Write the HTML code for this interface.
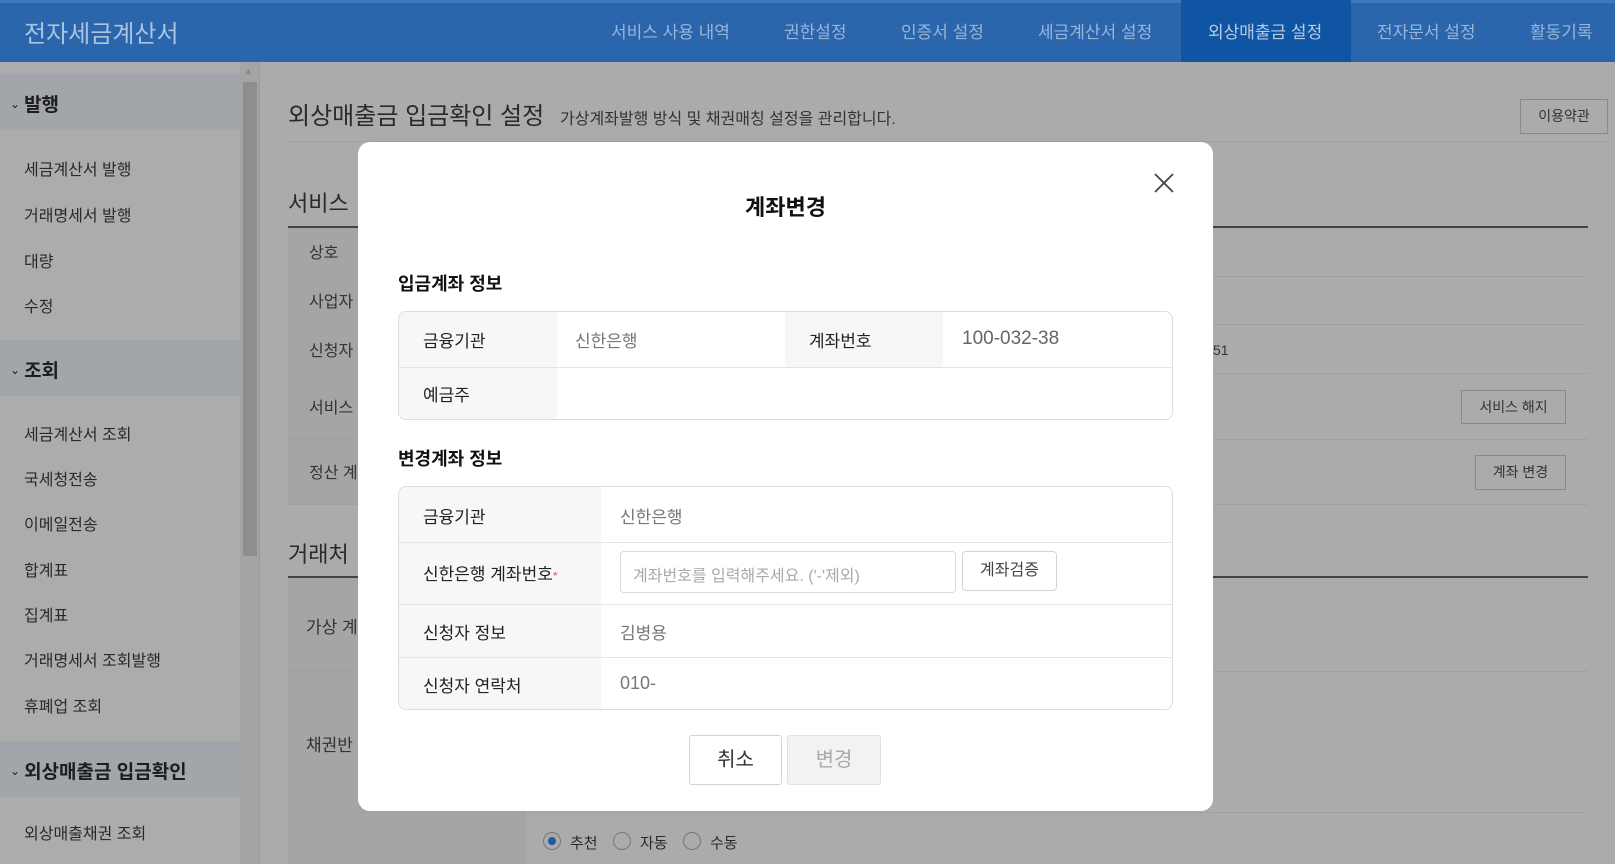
<!DOCTYPE html>
<html><head><meta charset="utf-8"><style>
*{margin:0;padding:0;box-sizing:border-box}
body{width:1615px;height:864px;overflow:hidden;background:#ababab;font-family:"Liberation Sans","Noto Sans CJK KR","NanumGothic",sans-serif;position:relative;color:#2a2a2a}
.a{position:absolute;white-space:nowrap}
.hd{left:0;top:0;width:1615px;height:62px;background:#2b66ad;border-top:3px solid #3a7ac0}
.nav{top:18px;font-size:17px;color:#98b4d8}
.side{left:0;top:62px;width:240px;height:802px;background:#acacac}
.sh{left:0;width:240px;height:56px;background:#a2a6aa;font-size:19px;font-weight:bold;color:#1e1e1e;padding:16px 0 0 10px}
.sh small{font-size:12px;font-weight:normal;vertical-align:3px;margin-right:4px}
.si{left:24px;font-size:16px;color:#2a2a2a}
.ln{height:1px;background:#a0a0a0}
.mod{left:358px;top:142px;width:855px;height:669px;background:#fff;border-radius:12px}
.tb{border:1px solid #dcdde0;border-radius:8px;overflow:hidden;background:#fff}
.lb{background:#f7f7f7;font-size:17px;color:#222}
.vl{font-size:17px;color:#777}
</style></head><body>
<div class="a hd"></div>
<div class="a" style="left:24px;top:14px;font-size:24px;color:#a9c3e3">전자세금계산서</div>
<div class="a" style="left:1181px;top:0;width:170px;height:62px;background:#0f55a3"></div>
<div class="a nav" style="left:611px">서비스 사용 내역</div>
<div class="a nav" style="left:784px">권한설정</div>
<div class="a nav" style="left:901px">인증서 설정</div>
<div class="a nav" style="left:1038px">세금계산서 설정</div>
<div class="a nav" style="left:1208px;color:#b6cbe6">외상매출금 설정</div>
<div class="a nav" style="left:1377px">전자문서 설정</div>
<div class="a nav" style="left:1530px">활동기록</div>

<div class="a side"></div>
<div class="a" style="left:240px;top:62px;width:20px;height:802px;background:#a4a4a4;border-right:1px solid #999"></div>
<div class="a" style="left:244px;top:66px;font-size:9px;color:#888">▲</div>
<div class="a" style="left:243px;top:82px;width:14px;height:474px;background:#8e8e8e"></div>
<div class="a sh" style="top:74px"><small>⌄</small>발행</div>
<div class="a si" style="top:156px">세금계산서 발행</div>
<div class="a si" style="top:202px">거래명세서 발행</div>
<div class="a si" style="top:248px">대량</div>
<div class="a si" style="top:293px">수정</div>
<div class="a sh" style="top:340px"><small>⌄</small>조회</div>
<div class="a si" style="top:421px">세금계산서 조회</div>
<div class="a si" style="top:466px">국세청전송</div>
<div class="a si" style="top:511px">이메일전송</div>
<div class="a si" style="top:557px">합계표</div>
<div class="a si" style="top:602px">집계표</div>
<div class="a si" style="top:647px">거래명세서 조회발행</div>
<div class="a si" style="top:693px">휴폐업 조회</div>
<div class="a sh" style="top:741px"><small>⌄</small>외상매출금 입금확인</div>
<div class="a si" style="top:820px">외상매출채권 조회</div>

<div class="a" style="left:288px;top:96px;font-size:24px;color:#2a2a2a">외상매출금 입금확인 설정</div>
<div class="a" style="left:560px;top:105px;font-size:16px;color:#333">가상계좌발행 방식 및 채권매칭 설정을 관리합니다.</div>
<div class="a" style="left:1520px;top:99px;width:88px;height:35px;border:1px solid #8a8a8a;font-size:14px;text-align:center;line-height:33px;color:#333">이용약관</div>
<div class="a ln" style="left:288px;top:141px;width:1320px"></div>
<div class="a" style="left:288px;top:186px;font-size:22px">서비스</div>
<div class="a" style="left:288px;top:226px;width:1300px;height:2px;background:#444"></div>
<div class="a" style="left:288px;top:228px;width:70px;height:276px;background:#a5a5a5"></div>
<div class="a ln" style="left:288px;top:276px;width:1300px"></div>
<div class="a ln" style="left:288px;top:324px;width:1300px"></div>
<div class="a ln" style="left:288px;top:373px;width:1300px"></div>
<div class="a ln" style="left:288px;top:439px;width:1300px"></div>
<div class="a ln" style="left:288px;top:504px;width:1300px"></div>
<div class="a" style="left:309px;top:239px;font-size:16px;color:#333">상호</div>
<div class="a" style="left:309px;top:288px;font-size:16px;color:#333">사업자</div>
<div class="a" style="left:309px;top:337px;font-size:16px;color:#333">신청자</div>
<div class="a" style="left:309px;top:394px;font-size:16px;color:#333">서비스</div>
<div class="a" style="left:309px;top:459px;font-size:16px;color:#333">정산 계</div>
<div class="a" style="left:1213px;top:342px;font-size:14px;color:#333">51</div>
<div class="a" style="left:1461px;top:390px;width:105px;height:34px;border:1px solid #8a8a8a;font-size:14px;text-align:center;line-height:32px;color:#333">서비스 해지</div>
<div class="a" style="left:1475px;top:455px;width:91px;height:35px;border:1px solid #8a8a8a;font-size:14px;text-align:center;line-height:33px;color:#333">계좌 변경</div>
<div class="a" style="left:288px;top:537px;font-size:22px">거래처</div>
<div class="a" style="left:288px;top:576px;width:1300px;height:2px;background:#444"></div>
<div class="a" style="left:288px;top:578px;width:238px;height:286px;background:#a5a5a5"></div>
<div class="a ln" style="left:288px;top:671px;width:1300px"></div>
<div class="a ln" style="left:288px;top:812px;width:1300px"></div>
<div class="a" style="left:306px;top:613px;font-size:17px;color:#333">가상 계</div>
<div class="a" style="left:306px;top:731px;font-size:17px;color:#333">채권반</div>
<div class="a" style="left:543px;top:832px;width:18px;height:18px;border:1px solid #777;border-radius:50%;background:#aaa"><div style="margin:4px;width:8px;height:8px;border-radius:50%;background:#1f5ca8"></div></div>
<div class="a" style="left:570px;top:832px;font-size:15px">추천</div>
<div class="a" style="left:613px;top:832px;width:18px;height:18px;border:1px solid #777;border-radius:50%"></div>
<div class="a" style="left:640px;top:832px;font-size:15px">자동</div>
<div class="a" style="left:683px;top:832px;width:18px;height:18px;border:1px solid #777;border-radius:50%"></div>
<div class="a" style="left:710px;top:832px;font-size:15px">수동</div>

<div class="a mod"></div>
<div class="a" style="left:358px;top:190px;width:855px;text-align:center;font-size:22px;font-weight:bold;color:#111">계좌변경</div>
<svg class="a" style="left:1153px;top:172px" width="22" height="22" viewBox="0 0 22 22"><path d="M2 2L20 20M20 2L2 20" stroke="#444" stroke-width="1.8"/></svg>
<div class="a" style="left:398px;top:270px;font-size:18px;font-weight:bold;color:#111">입금계좌 정보</div>
<div class="a tb" style="left:398px;top:311px;width:775px;height:109px">
 <div class="a lb" style="left:0;top:0;width:158px;height:55px;padding:15px 0 0 24px">금융기관</div>
 <div class="a vl" style="left:176px;top:15px">신한은행</div>
 <div class="a lb" style="left:386px;top:0;width:158px;height:55px;padding:15px 0 0 24px">계좌번호</div>
 <div class="a vl" style="left:563px;top:16px;font-size:19px;color:#666">100-032-38</div>
 <div class="a" style="left:0;top:55px;width:775px;height:1px;background:#e4e4e4"></div>
 <div class="a lb" style="left:0;top:56px;width:158px;height:53px;padding:13px 0 0 24px">예금주</div>
</div>
<div class="a" style="left:398px;top:445px;font-size:18px;font-weight:bold;color:#111">변경계좌 정보</div>
<div class="a tb" style="left:398px;top:486px;width:775px;height:224px">
 <div class="a lb" style="left:0;top:0;width:202px;height:224px"></div>
 <div class="a" style="left:0;top:55px;width:775px;height:1px;background:#e4e4e4"></div>
 <div class="a" style="left:0;top:117px;width:775px;height:1px;background:#e4e4e4"></div>
 <div class="a" style="left:0;top:170px;width:775px;height:1px;background:#e4e4e4"></div>
 <div class="a lb" style="left:24px;top:16px;background:none">금융기관</div>
 <div class="a vl" style="left:221px;top:16px">신한은행</div>
 <div class="a lb" style="left:24px;top:73px;background:none">신한은행 계좌번호<span style="color:#e55;font-size:12px">*</span></div>
 <div class="a" style="left:221px;top:64px;width:336px;height:42px;border:1px solid #dcdcdc;border-radius:4px;font-size:16px;color:#aaa;padding:10px 0 0 12px">계좌번호를 입력해주세요. ('-'제외)</div>
 <div class="a" style="left:563px;top:64px;width:95px;height:40px;border:1px solid #d4d4d4;border-radius:4px;font-size:16px;color:#444;text-align:center;line-height:38px">계좌검증</div>
 <div class="a lb" style="left:24px;top:132px;background:none">신청자 정보</div>
 <div class="a vl" style="left:221px;top:132px">김병용</div>
 <div class="a lb" style="left:24px;top:185px;background:none">신청자 연락처</div>
 <div class="a vl" style="left:221px;top:186px;font-size:18px">010-</div>
</div>
<div class="a" style="left:689px;top:735px;width:93px;height:50px;border:1px solid #d4d4d4;border-radius:3px;font-size:20px;color:#333;text-align:center;line-height:48px;background:#fff">취소</div>
<div class="a" style="left:787px;top:735px;width:94px;height:50px;border:1px solid #e0e0e0;border-radius:3px;font-size:20px;color:#aaa;text-align:center;line-height:48px;background:#f2f2f2">변경</div>
</body></html>
